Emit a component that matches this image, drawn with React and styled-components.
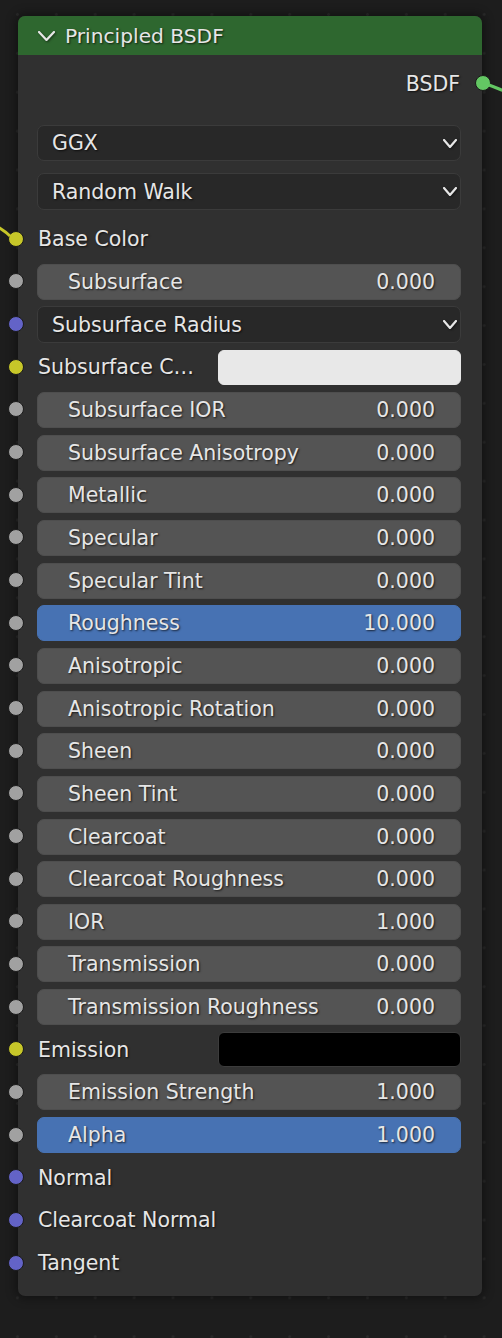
import styled, { createGlobalStyle } from 'styled-components';

const GlobalStyle = createGlobalStyle`
  html, body {
    margin: 0;
    padding: 0;
    background-color: #1d1d1d;
    background-image: radial-gradient(circle, #2a2a2a 1.2px, transparent 1.6px);
    background-size: 38.9px 38.9px;
    background-position: -2px -5px;
  }
  body {
    font-family: "DejaVu Sans", "Liberation Sans", sans-serif;
  }
`;

const SOCKETS = {
  grey: '#a1a1a1',
  yellow: '#c7c729',
  purple: '#6363c7',
  green: '#63c763',
};

const Page = styled.div`
  position: relative;
  width: 502px;
  height: 1338px;
  overflow: hidden;
  padding: 16px 0 0 18px;
  box-sizing: border-box;
`;

const Wires = styled.svg`
  position: absolute;
  left: 0;
  top: 0;
  pointer-events: none;
`;

const Node = styled.div`
  position: relative;
  width: 464px;
  height: 1280px;
  background: #303030;
  border-radius: 7px;
  box-shadow: 0 0 10px 3px rgba(0, 0, 0, 0.35);
  display: flex;
  flex-direction: column;
  color: #e6e6e6;
  font-size: 20.5px;
  text-shadow: 1px 1px 2px rgba(0, 0, 0, 0.7);
`;

const Header = styled.div`
  height: 39px;
  background: #2e672f;
  border-radius: 7px 7px 0 0;
  display: flex;
  align-items: center;
  gap: 10px;
  padding-left: 20px;
  font-size: 20.2px;
  svg { filter: drop-shadow(1px 1px 1px rgba(0,0,0,0.5)); }
`;

const Body = styled.div`
  display: flex;
  flex-direction: column;
  padding: 7px 21px 0 19px;
`;

const OutputRow = styled.div`
  position: relative;
  height: 43px;
  display: flex;
  align-items: center;
  justify-content: flex-end;
`;

const Menus = styled.div`
  display: flex;
  flex-direction: column;
  gap: 12px;
  padding: 20px 0 8px;
`;

const Socket = styled.span`
  position: absolute;
  top: 50%;
  width: 14px;
  height: 14px;
  margin-top: -8.5px;
  border-radius: 50%;
  background: ${p => SOCKETS[p.$kind]};
  border: 1.5px solid #1a1a1a;
  ${p => (p.$out ? 'right: -30px;' : 'left: -29.5px;')}
`;

const Rows = styled.div`
  display: grid;
  grid-auto-rows: 42.667px;
`;

const Row = styled.div`
  position: relative;
  display: flex;
  align-items: center;
`;

const Field = styled.div`
  flex: 1 1 auto;
  height: 36px;
  box-sizing: border-box;
  border-radius: 7px;
  display: flex;
  align-items: center;
  justify-content: space-between;
  background: ${p => (p.$active ? '#4772b3' : '#545454')};
  border: 1px solid ${p => (p.$active ? '#4772b3' : '#4e4e4e')};
  padding: 0 25px 0 30px;
`;

const Menu = styled.div`
  flex: 1 1 auto;
  height: ${p => p.$h || 36}px;
  box-sizing: border-box;
  border-radius: 7px;
  background: #282828;
  border: 1.5px solid #3b3b3b;
  display: flex;
  align-items: center;
  justify-content: space-between;
  padding: 0 3px 0 14px;
  svg { filter: drop-shadow(1px 1px 1px rgba(0,0,0,0.5)); }
`;

const Label = styled.span`
  padding-left: 1px;
  white-space: nowrap;
`;

const ColorLabel = styled.span`
  width: 180px;
  padding-left: 1px;
  white-space: nowrap;
`;

const Swatch = styled.div`
  flex: 1 1 auto;
  height: 35px;
  border-radius: 6px;
  background: ${p => p.$color};
  border: 1px solid ${p => (p.$color === '#000000' ? '#3c3c3c' : '#e8e8e8')};
  box-sizing: border-box;
`;

const Chevron = ({ w = 12, h = 7 }) => (
  <svg width={w + 2} height={h + 2} viewBox={`-1 -1 ${w + 2} ${h + 2}`}>
    <polyline points={`0,0 ${w / 2},${h} ${w},0`} fill="none" stroke="#e6e6e6" strokeWidth="2.2" strokeLinejoin="round" strokeLinecap="round" />
  </svg>
);

const rows = [
  { kind: 'label', label: 'Base Color', socket: 'yellow' },
  { kind: 'value', label: 'Subsurface', value: '0.000' },
  { kind: 'menu', label: 'Subsurface Radius', socket: 'purple' },
  { kind: 'color', label: 'Subsurface C…', color: '#e8e8e8', socket: 'yellow' },
  { kind: 'value', label: 'Subsurface IOR', value: '0.000' },
  { kind: 'value', label: 'Subsurface Anisotropy', value: '0.000' },
  { kind: 'value', label: 'Metallic', value: '0.000' },
  { kind: 'value', label: 'Specular', value: '0.000' },
  { kind: 'value', label: 'Specular Tint', value: '0.000' },
  { kind: 'value', label: 'Roughness', value: '10.000', active: true },
  { kind: 'value', label: 'Anisotropic', value: '0.000' },
  { kind: 'value', label: 'Anisotropic Rotation', value: '0.000' },
  { kind: 'value', label: 'Sheen', value: '0.000' },
  { kind: 'value', label: 'Sheen Tint', value: '0.000' },
  { kind: 'value', label: 'Clearcoat', value: '0.000' },
  { kind: 'value', label: 'Clearcoat Roughness', value: '0.000' },
  { kind: 'value', label: 'IOR', value: '1.000' },
  { kind: 'value', label: 'Transmission', value: '0.000' },
  { kind: 'value', label: 'Transmission Roughness', value: '0.000' },
  { kind: 'color', label: 'Emission', color: '#000000', socket: 'yellow' },
  { kind: 'value', label: 'Emission Strength', value: '1.000' },
  { kind: 'value', label: 'Alpha', value: '1.000', active: true },
  { kind: 'label', label: 'Normal', socket: 'purple' },
  { kind: 'label', label: 'Clearcoat Normal', socket: 'purple' },
  { kind: 'label', label: 'Tangent', socket: 'purple' },
];

const InputRow = ({ row }) => {
  let content;
  if (row.kind === 'value') {
    content = (
      <Field $active={row.active}>
        <span>{row.label}</span>
        <span>{row.value}</span>
      </Field>
    );
  } else if (row.kind === 'menu') {
    content = (
      <Menu $h={37}>
        <span>{row.label}</span>
        <Chevron />
      </Menu>
    );
  } else if (row.kind === 'color') {
    content = (
      <>
        <ColorLabel>{row.label}</ColorLabel>
        <Swatch $color={row.color} />
      </>
    );
  } else {
    content = <Label>{row.label}</Label>;
  }
  return (
    <Row>
      <Socket $kind={row.socket || 'grey'} />
      {content}
    </Row>
  );
};

export default function App() {
  return (
    <>
      <GlobalStyle />
      <Page>
        <Node>
          <Header>
            <Chevron w={15} h={8} />
            <span>Principled BSDF</span>
          </Header>
          <Body>
            <OutputRow>
              <span style={{ marginRight: 1 }}>BSDF</span>
              <Socket $kind="green" $out />
            </OutputRow>
            <Menus>
              <Menu>
                <span>GGX</span>
                <Chevron />
              </Menu>
              <Menu $h={37}>
                <span>Random Walk</span>
                <Chevron />
              </Menu>
            </Menus>
            <Rows>
              {rows.map(r => (
                <InputRow key={r.label} row={r} />
              ))}
            </Rows>
          </Body>
        </Node>
        <Wires width="502" height="1338">
          <path d="M489 85 C495 87, 499 89, 504 91" stroke="#63c763" strokeWidth="3" fill="none" />
          <path d="M-2 227 C3 230, 7 233, 10 236" stroke="#c7c729" strokeWidth="3" fill="none" />
        </Wires>
      </Page>
    </>
  );
}
